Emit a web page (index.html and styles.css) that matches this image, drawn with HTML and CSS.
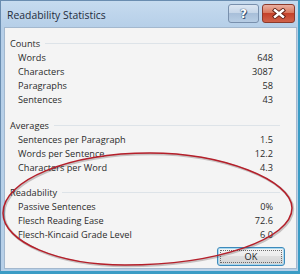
FILE: index.html
```html
<!DOCTYPE html>
<html lang="en">
<head>
    <meta charset="UTF-8">
    <title>Readability Statistics</title>
    <link rel="stylesheet" href="styles.css">
</head>
<body>
    <div class="window">
        <div class="titlebar">
            <span class="title">Readability Statistics</span>
            <div class="caption-buttons">
                <button class="cap-btn help">?</button>
                <button class="cap-btn close">
                    <svg width="14" height="11" viewBox="-7 -5.5 14 11">
                        <path d="M-4 -3.2 L4 3.2 M4 -3.2 L-4 3.2" stroke="#5b1c12" stroke-width="4.2" stroke-linecap="square"/>
                        <path d="M-4 -3.2 L4 3.2 M4 -3.2 L-4 3.2" stroke="#fff" stroke-width="2.4" stroke-linecap="square"/>
                    </svg>
                </button>
            </div>
        </div>

        <div class="content">
            <section class="group">
                <div class="group-head"><span>Counts</span></div>
                <div class="row"><span>Words</span><span>648</span></div>
                <div class="row"><span>Characters</span><span>3087</span></div>
                <div class="row"><span>Paragraphs</span><span>58</span></div>
                <div class="row"><span>Sentences</span><span>43</span></div>
            </section>

            <section class="group">
                <div class="group-head"><span>Averages</span></div>
                <div class="row"><span>Sentences per Paragraph</span><span>1.5</span></div>
                <div class="row"><span>Words per Sentence</span><span>12.2</span></div>
                <div class="row"><span>Characters per Word</span><span>4.3</span></div>
            </section>

            <section class="group group-last">
                <div class="group-head"><span>Readability</span></div>
                <div class="row"><span>Passive Sentences</span><span>0%</span></div>
                <div class="row"><span>Flesch Reading Ease</span><span>72.6</span></div>
                <div class="row"><span>Flesch-Kincaid Grade Level</span><span>6.0</span></div>
            </section>

            <div class="actions">
                <button class="ok-btn"><span class="ok-label">OK</span></button>
            </div>
        </div>

        <!-- hand drawn highlight around the readability block -->
        <svg class="annotation" width="300" height="274" viewBox="0 0 300 274">
            <path class="annotation-shadow" d="M3,213 C3,180 69,153 150,153 C222,153 292,180 292,208 C292,239 217,265 125,265 C58,265 3,242 3,213 Z"/>
            <path class="annotation-line" d="M3,213 C3,180 69,153 150,153 C222,153 292,180 292,208 C292,239 217,265 125,265 C58,265 3,242 3,213 Z"/>
        </svg>
    </div>
</body>
</html>
```

FILE: styles.css
```css
body {
    margin: 0;
    background: #3b9cc5;
    font-family: "Open Sans", "Liberation Sans", sans-serif;
}
.window {
    position: relative;
    width: 298px;
    height: 271px;
    box-sizing: border-box;
    border-top: 1px solid #6a8db0;
    border-left: 1px solid #6a8db0;
    padding: 0 1px 2px 3px;
    background: linear-gradient(to bottom, #c6dbef, #b6cfe8 26px, #b7d0e8);
    display: flex;
    flex-direction: column;
}
.titlebar {
    height: 26px;
    box-sizing: border-box;
    padding-top: 3px;
    display: flex;
    align-items: flex-start;
}
.title {
    padding: 2px 0 0 3px;
    font-size: 10.4px;
    line-height: 18px;
    color: #1f2d3d;
}
.caption-buttons {
    margin-left: auto;
    margin-right: 2px;
    display: flex;
    gap: 3px;
}
.cap-btn {
    height: 19px;
    padding: 0;
    border-radius: 3px;
    display: flex;
    align-items: center;
    justify-content: center;
}
.help {
    width: 31px;
    border: 1px solid #7990ad;
    background: linear-gradient(to bottom, #dde7f3, #c6d6e8 45%, #a8bfd9 50%, #b7cde4);
    color: #fff;
    font-family: "DejaVu Sans", sans-serif;
    font-weight: bold;
    font-size: 12px;
    text-shadow: 0 0 1px #2f4a6a, 0 0 1px #2f4a6a, 1px 1px 0 #3f5a7a;
}
.close {
    width: 33px;
    border: 1px solid #8b3a2c;
    background: linear-gradient(to bottom, #eab0a2, #d9795f 45%, #c4412a 50%, #d0624a);
}
.content {
    flex: 1;
    background: #f4f4f4;
    border: 1px solid #a3b8ce;
    padding: 9px 11px 0 5px;
    color: #2b2b2b;
    font-size: 9.2px;
}
.group {
    padding-right: 5px;
    margin-bottom: 12px;
}
.group-last {
    margin-bottom: 5px;
}
.group + .group-last {
    margin-top: -1px;
}
.group-head {
    display: flex;
    align-items: center;
    line-height: 14px;
}
.group-head::after {
    content: "";
    flex: 1;
    height: 1px;
    margin: -2px 0 0 5px;
    background: #dde3e8;
}
.row {
    display: flex;
    justify-content: space-between;
    padding: 0 7px 0 8px;
    line-height: 14px;
}
.actions {
    display: flex;
    justify-content: flex-end;
}
.ok-btn {
    width: 68px;
    height: 19px;
    padding: 2px;
    border: 1px solid #3d8abb;
    border-radius: 3px;
    background: linear-gradient(to bottom, #f3f3f3, #ececec 50%, #dedede 50%, #d4d4d4);
    box-shadow: inset 0 0 0 1px #a9d9f0;
    font-family: "Open Sans", "Liberation Sans", sans-serif;
    font-size: 9.2px;
    color: #222;
}
.ok-label {
    display: block;
    height: 100%;
    box-sizing: border-box;
    border: 1px dotted #6c6c6c;
    line-height: 11px;
}
.annotation {
    position: absolute;
    top: -1px;
    left: -1px;
    pointer-events: none;
}
.annotation path {
    fill: none;
}
.annotation-shadow {
    stroke: rgba(60, 40, 40, 0.25);
    stroke-width: 2.4;
    transform: translate(1px, 1px);
}
.annotation-line {
    stroke: #b51f2a;
    stroke-width: 1.5;
}
```
